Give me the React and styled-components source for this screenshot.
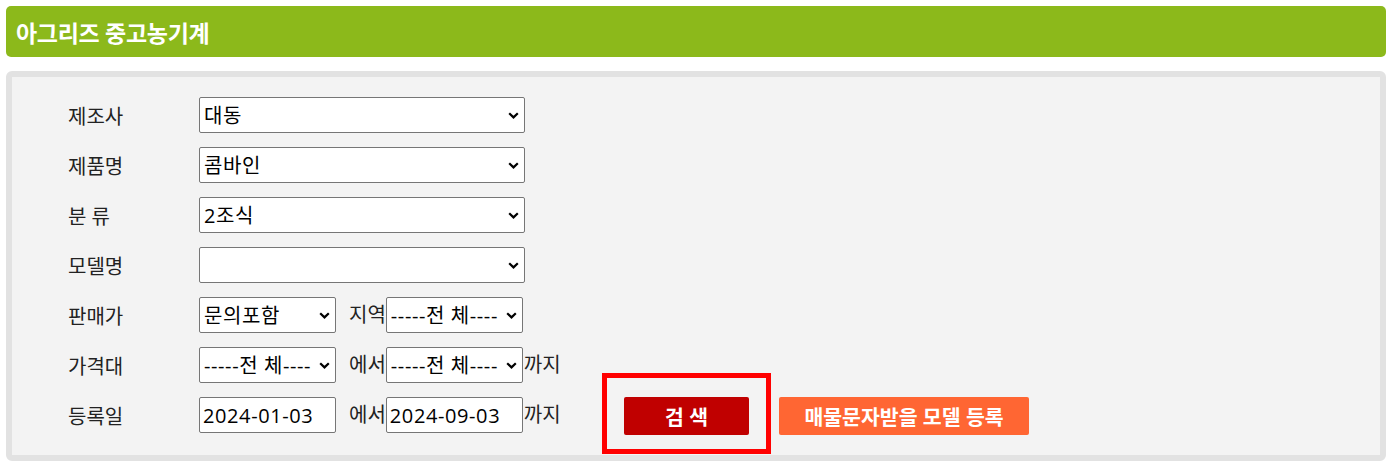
import React from "react";
import styled, { createGlobalStyle } from "styled-components";

const GlobalStyle = createGlobalStyle`
  html, body { margin: 0; padding: 0; background: #ffffff; }
  body { font-family: "Open Sans", "Noto Sans CJK KR", sans-serif; }
`;

const FONT = `"Open Sans", "Noto Sans CJK KR", sans-serif`;

const Page = styled.div`
  width: 1380px;
  padding: 6px 7px 0 6px;
  display: flex;
  flex-direction: column;
  gap: 14px;
`;

const TitleBar = styled.div`
  height: 51px;
  background: #8cb91b;
  border-radius: 5px;
  display: flex;
  align-items: center;
  padding: 0 10px;
  box-sizing: border-box;
`;

const Title = styled.h2`
  margin: 0;
  font-family: ${FONT};
  font-size: 23px;
  font-weight: 700;
  color: #ffffff;
  letter-spacing: -0.3px;
`;

const Panel = styled.div`
  border: 6px solid #e2e2e2;
  background: #f3f3f3;
  border-radius: 6px;
  padding: 20px 0 20px 56px;
  display: flex;
  flex-direction: column;
  gap: 14px;
`;

const FormRow = styled.div`
  display: flex;
  align-items: flex-start;
`;

const Label = styled.div`
  width: 131px;
  height: 36px;
  display: flex;
  align-items: center;
  font-family: ${FONT};
  font-size: 20px;
  color: #222;
`;

const Fields = styled.div`
  display: flex;
  align-items: center;
  width: ${(p) => (p.$width ? `${p.$width}px` : "auto")};
  flex: none;
`;

const SelectWrap = styled.div`
  position: relative;
  width: ${(p) => p.$width}px;
  height: 36px;
  flex: none;
`;

const Select = styled.select`
  appearance: none;
  -webkit-appearance: none;
  width: 100%;
  height: 100%;
  box-sizing: border-box;
  border: 1px solid #767676;
  border-radius: 2px;
  background: #ffffff;
  color: #000;
  font-family: ${FONT};
  font-size: 20px;
  letter-spacing: 0.6px;
  padding: 0 20px 0 4px;
  margin: 0;
  outline: none;
`;

const Chevron = styled.svg`
  position: absolute;
  right: 6px;
  top: 50%;
  width: 11px;
  height: 7px;
  margin-top: -3px;
  pointer-events: none;
`;

const Joiner = styled.span`
  font-family: ${FONT};
  font-size: 20px;
  color: #222;
  margin-left: ${(p) => (p.$gap ? `${p.$gap}px` : "0")};
  margin-right: ${(p) => (p.$after ? `${p.$after}px` : "0")};
  line-height: 36px;
  white-space: nowrap;
`;

const TextInput = styled.input`
  width: 137px;
  height: 36px;
  box-sizing: border-box;
  border: 1px solid #767676;
  border-radius: 2px;
  background: #fff;
  font-family: ${FONT};
  font-size: 20px;
  letter-spacing: 0.6px;
  color: #000;
  padding: 0 3px;
  margin: 0;
  outline: none;
`;

const ButtonGroup = styled.div`
  display: flex;
  align-items: center;
  gap: 30px;
`;

const Highlight = styled.div`
  position: relative;
  display: flex;
`;

const HighlightBox = styled.span`
  position: absolute;
  top: -24px;
  bottom: -19px;
  left: -22px;
  right: -22px;
  border: 5px solid #ff0000;
  pointer-events: none;
`;

const ActionButton = styled.button`
  width: ${(p) => p.$width}px;
  height: 38px;
  border: none;
  border-radius: 2px;
  background: ${(p) => p.$bg};
  color: #ffffff;
  font-family: ${FONT};
  font-size: 20.5px;
  font-weight: 700;
  padding: 0;
  cursor: pointer;
`;

function Dropdown({ width, value, options }) {
  return (
    <SelectWrap $width={width}>
      <Select defaultValue={value}>
        {options.map((o) => (
          <option key={o} value={o}>
            {o}
          </option>
        ))}
      </Select>
      <Chevron viewBox="0 0 11 7">
        <path d="M1.2 1.2 L5.5 5.4 L9.8 1.2" fill="none" stroke="#000" strokeWidth="2.2" />
      </Chevron>
    </SelectWrap>
  );
}

const ALL = "-----전 체----";

export default function App() {
  return (
    <>
      <GlobalStyle />
      <Page>
        <TitleBar>
          <Title>아그리즈 중고농기계</Title>
        </TitleBar>
        <Panel>
          <FormRow>
            <Label>제조사</Label>
            <Dropdown width={326} value="대동" options={["대동"]} />
          </FormRow>
          <FormRow>
            <Label>제품명</Label>
            <Dropdown width={326} value="콤바인" options={["콤바인"]} />
          </FormRow>
          <FormRow>
            <Label>분 류</Label>
            <Dropdown width={326} value="2조식" options={["2조식"]} />
          </FormRow>
          <FormRow>
            <Label>모델명</Label>
            <Dropdown width={326} value="" options={[""]} />
          </FormRow>
          <FormRow>
            <Label>판매가</Label>
            <Fields>
              <Dropdown width={137} value="문의포함" options={["문의포함"]} />
              <Joiner $gap={13}>지역</Joiner>
              <Dropdown width={137} value={ALL} options={[ALL]} />
            </Fields>
          </FormRow>
          <FormRow>
            <Label>가격대</Label>
            <Fields>
              <Dropdown width={137} value={ALL} options={[ALL]} />
              <Joiner $gap={13}>에서</Joiner>
              <Dropdown width={137} value={ALL} options={[ALL]} />
              <Joiner $gap={1}>까지</Joiner>
            </Fields>
          </FormRow>
          <FormRow>
            <Label>등록일</Label>
            <Fields $width={425}>
              <TextInput type="text" defaultValue="2024-01-03" />
              <Joiner $gap={13}>에서</Joiner>
              <TextInput type="text" defaultValue="2024-09-03" />
              <Joiner $gap={1}>까지</Joiner>
            </Fields>
            <ButtonGroup>
              <Highlight>
                <ActionButton $width={125} $bg="#c00000">검 색</ActionButton>
                <HighlightBox />
              </Highlight>
              <ActionButton $width={250} $bg="#ff6633">매물문자받을 모델 등록</ActionButton>
            </ButtonGroup>
          </FormRow>
        </Panel>
      </Page>
    </>
  );
}
